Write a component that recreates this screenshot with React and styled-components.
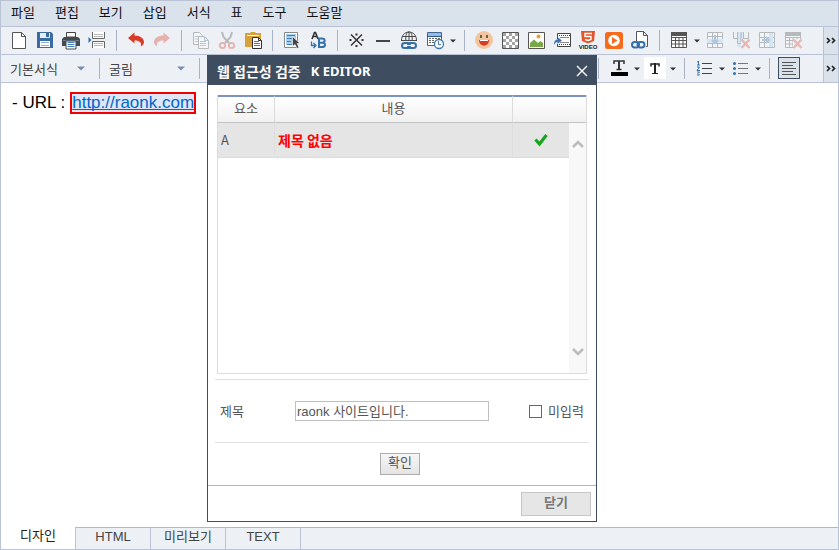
import React from "react";
import styled, { createGlobalStyle, css } from "styled-components";

const Global = createGlobalStyle`
  *, *::before, *::after { box-sizing: border-box; }
  body { margin: 0; background: #fff; }
  body, button, input, select {
    font-family: "Noto Sans CJK KR", "Liberation Sans", sans-serif;
    font-size: 13px;
  }
  button, select { cursor: pointer; }
`;

const line = "#b9c3d5";
const navy = "#3f4d60";

/* ---------- editor frame ---------- */

const Editor = styled.div`
  position: relative;
  display: flex;
  flex-direction: column;
  min-height: 100vh;
  border: 1px solid ${line};
  background: #fff;
`;

const MenuBar = styled.nav`
  display: flex;
  gap: 20px;
  height: 26px;
  padding: 0 10px 4px;
  background: #dae2eb;
  border-bottom: 1px solid ${line};
`;

const MenuItem = styled.button`
  padding: 0;
  border: 0;
  background: none;
  color: #111;
  line-height: 20px;
  white-space: nowrap;
`;

const Toolbar = styled.div`
  display: flex;
  height: 28px;
  padding-left: 5px;
  background: #edf1f5;
  border-bottom: 1px solid ${line};
`;

const ToolButton = styled.button`
  flex: none;
  display: flex;
  align-items: center;
  justify-content: center;
  width: 26px;
  height: 27px;
  padding: 0;
  border: 0;
  background: none;
  opacity: ${(p) => (p.$faded ? 0.35 : 1)};
`;

const ArrowButton = styled(ToolButton)`
  width: 10px;
`;

const FrameButton = styled(ToolButton)`
  width: 22px;
  height: 22px;
  margin: 2px;
  background: ${(p) => (p.$pressed ? "#d9e1ea" : "#fff")};
  border: ${(p) => (p.$pressed ? `1px solid ${navy}` : "0")};
`;

const Separator = styled.span`
  flex: none;
  width: 1px;
  height: 21px;
  margin: 3px 6px;
  background: #aab2c6;
`;

const More = styled(ToolButton)`
  width: 15px;
  margin-left: auto;
  background: #dae2eb;
  border-left: 1px solid ${line};
`;

const FormatBar = styled(Toolbar)`
  padding-left: 0;
`;

const Picker = styled.label`
  flex: none;
  display: flex;
  align-items: center;
  width: ${(p) => p.$width}px;
  height: 21px;
  margin-top: 3px;
  padding: 0 14px 0 9px;
  border-right: 1px solid #aab2c6;
`;

const PickerSelect = styled.select`
  appearance: none;
  flex: 1;
  min-width: 0;
  height: 21px;
  padding: 0;
  border: 0;
  background: none;
  color: #444;
`;

const StyleTools = styled.div`
  display: flex;
  padding-left: 7px;
`;

const Page = styled.main`
  flex: 1;
  padding: 9px 11px;
`;

const Paragraph = styled.p`
  display: flex;
  align-items: center;
  gap: 5px;
  margin: 0;
  color: #000;
  font-family: "Liberation Sans", sans-serif;
  font-size: 17px;
  line-height: 18px;
`;

const UrlLink = styled.a`
  border: 2px solid #f00000;
  background: #dfe6f6;
  color: #0066cc;
  text-decoration: underline;
  text-decoration-skip-ink: none;
`;

const Tabs = styled.div`
  display: flex;
  height: 22px;
`;

const Tab = styled.button`
  width: ${(p) => (p.$active ? 74 : 75)}px;
  padding: 0 0 4px;
  border: 0;
  color: #444;
  background: #edf1f5;
  font-family: "Liberation Sans", "Noto Sans CJK KR", sans-serif;
  line-height: 16px;
  ${(p) =>
    p.$active
      ? css`
          background: #fff;
          color: #222;
        `
      : css`
          border-left: 1px solid ${line};
          border-top: 1px solid #adb8cc;
        `}
`;

const TabRest = styled.div`
  flex: 1;
  border-left: 1px solid ${line};
  border-top: 1px solid #adb8cc;
  background: #edf1f5;
`;

/* ---------- dialog ---------- */

const Dialog = styled.section`
  position: absolute;
  top: 54px;
  left: 206px;
  width: 390px;
  border: 1px solid ${navy};
  background: #fff;
  color: #555;
`;

const DialogHeader = styled.header`
  display: flex;
  align-items: center;
  justify-content: space-between;
  height: 29px;
  padding: 0 6px 0 9px;
  background: ${navy};
`;

const DialogTitle = styled.h1`
  display: flex;
  align-items: center;
  gap: 10px;
  margin: 0;
  color: #fff;
  font-size: 14px;
  font-weight: 700;
  line-height: 26px;
`;

const Product = styled.span`
  font-family: "Noto Sans", sans-serif;
  font-size: 13px;
  line-height: 28px;
`;

const CloseIcon = styled.button`
  display: flex;
  padding: 0;
  border: 0;
  background: none;
`;

const DialogBody = styled.div`
  padding: 10px 7px 0;
`;

const TableFrame = styled.div`
  margin: 0 2px 5px;
`;

const Results = styled.table`
  width: 100%;
  table-layout: fixed;
  border-collapse: separate;
  border-spacing: 0;
  border-left: 1px solid #dcdcdc;
  border-right: 1px solid #dcdcdc;
`;

const Col = styled.col`
  width: ${(p) => p.$width}px;
`;

const HeadCell = styled.th`
  height: 28px;
  padding: 0 0 4px;
  border-top: 2px solid #7b93c3;
  border-bottom: 1px solid #c3c3c3;
  border-right: ${(p) => (p.$last ? "0" : "1px solid #dcdcdc")};
  background: linear-gradient(#fff, #f1f1f1);
  color: #555;
  font-weight: 400;
  line-height: 20px;
`;

const Cell = styled.td`
  height: 35px;
  padding: 0 3px;
  border-right: ${(p) => (p.$last ? "0" : "1px solid #dedede")};
  border-bottom: 1px solid #dcdcdc;
  background: #e5e5e5;
  line-height: 20px;
  text-align: ${(p) => (p.$last ? "center" : "left")};
`;

const Alert = styled.strong`
  color: #ff0000;
  font-size: 14px;
`;

const CheckMark = styled.svg`
  display: block;
  margin: 0 auto;
`;

const Filler = styled.td`
  height: 216px;
  padding: 0;
  border-bottom: 1px solid #dcdcdc;
`;

const ScrollCell = styled.td`
  padding: 0;
  border-bottom: 1px solid #dcdcdc;
  background: #f8f8f8;
`;

const ScrollTrack = styled.div`
  display: flex;
  flex-direction: column;
  justify-content: space-between;
  height: 250px;
  padding: 13px 0;
`;

const ScrollButton = styled.button`
  display: flex;
  justify-content: center;
  padding: 0;
  border: 0;
  background: none;
`;

const TitleRow = styled.div`
  display: flex;
  align-items: center;
  height: 64px;
  padding: 0 5px;
  border-top: 1px solid #e0e0e0;
  border-bottom: 1px solid #e0e0e0;
`;

const FieldLabel = styled.label`
  width: 75px;
  line-height: 20px;
`;

const TextField = styled.input`
  width: 194px;
  height: 20px;
  padding: 0 1px 2px;
  border: 1px solid #c0c0c0;
  color: #555;
  font-family: "Liberation Sans", "Noto Sans CJK KR", sans-serif;
  outline: 0;
`;

const CheckLabel = styled.label`
  display: flex;
  align-items: center;
  gap: 6px;
  margin-left: auto;
  line-height: 20px;
`;

const CheckBox = styled.input`
  appearance: none;
  width: 13px;
  height: 13px;
  margin: 0;
  border: 1px solid #666;
  background: #fff;
`;

const ConfirmRow = styled.div`
  display: flex;
  justify-content: center;
  height: 42px;
  padding: 10px 4px 0 0;
`;

const ConfirmButton = styled.button`
  width: 40px;
  height: 22px;
  padding: 0 0 4px;
  border: 1px solid #adadad;
  background: linear-gradient(#f6f6f6, #e4e4e4);
  color: #555;
  line-height: 16px;
`;

const DialogFooter = styled.footer`
  display: flex;
  justify-content: flex-end;
  height: 36px;
  padding: 6px 5px;
  border-top: 1px solid #adb8c2;
`;

const CloseButton = styled.button`
  width: 70px;
  height: 24px;
  padding: 0 0 4px;
  border: 1px solid #c6c6c6;
  background: #e6e6e6;
  color: #777;
  font-weight: 700;
  line-height: 18px;
`;

/* ---------- icons ---------- */

const Icon = ({ children }) => (
  <svg width="20" height="21" viewBox="0 0 20 21" fill="none" aria-hidden="true">
    {children}
  </svg>
);

const Caret = ({ color = "#333" }) => (
  <svg width="6" height="4" viewBox="0 0 6 4" aria-hidden="true">
    <path d="M0 0.5H6L3 3.5Z" fill={color} />
  </svg>
);

const WideCaret = () => (
  <svg width="8" height="5" viewBox="0 0 8 5" aria-hidden="true">
    <path d="M0 0.5H8L4 4.5Z" fill="#7890ae" />
  </svg>
);

const links = (
  <g stroke="#356fa9" strokeWidth="2">
    <rect x="3" y="13" width="8" height="5" rx="2.5" />
    <rect x="9" y="13" width="8" height="5" rx="2.5" />
    <path d="M8 15.5h4" stroke="#edf1f5" strokeWidth="1" />
  </g>
);

const tableGrid = (
  <g>
    <path d="M2 3H18V17H2Z" fill="#fff" />
    <path d="M2.5 3V17.5H17.5V3M2 7.5H18M2 10.5H18M2 14H18M6.5 7V17M10 7V17M14 7V17" stroke="#555" />
    <path d="M2 2H18V6H2Z" fill="#555" />
  </g>
);

const redCross = (
  <g>
    <path d="M10 9H19V19H10Z" fill="#edf1f5" />
    <path d="M10.5 9.5L18.5 18M18.5 9.5L10.5 18" stroke="#e24a3b" strokeWidth="2.4" />
  </g>
);

const icons = {
  newDoc: (
    <>
      <path d="M3.5 2.5H12.5L16.5 6.5V18.5H3.5Z" fill="#fff" stroke="#555" />
      <path d="M12.5 2.5V6.5H16.5" stroke="#555" />
    </>
  ),
  save: (
    <>
      <path d="M2 2H16L18 4V18H2Z" fill="#396d9f" />
      <path d="M5 3H15V8H5Z" fill="#e6eef7" />
      <path d="M11 3H14V7H11Z" fill="#396d9f" />
      <path d="M5 11H15V17H5Z" fill="#fff" />
      <path d="M6 12.5H14M6 15.5H14" stroke="#8fb1d3" />
    </>
  ),
  print: (
    <>
      <path d="M5.5 2.5H14.5V7H5.5Z" fill="#fff" stroke="#444" />
      <path d="M3 7H17L19 9V16H1V9Z" fill="#424a52" />
      <path d="M2 10.5H18" stroke="#747b82" />
      <path d="M5 11H15V19H5Z" fill="#fff" stroke="#424a52" />
      <path d="M6.5 12.5H13.5M6.5 14.5H13.5M6.5 16.5H13.5" stroke="#4581b9" />
    </>
  ),
  pageBreak: (
    <>
      <path d="M5.5 2V8.5H17.5V2M5.5 18V11.5H17.5V18" fill="#fff" stroke="#666" />
      <path d="M7 4.5H16M7 6.5H16M7 13.5H16M7 15.5H16" stroke="#bbb" />
      <path d="M1.500 7L4.500 10L1.500 13Z" fill="#2f6fac" />
    </>
  ),
  undo: <path d="M2 8L8.500 2.500V5.500C14.500 5.500 18 8.500 18 12C18 14 16.500 16 14.500 16.500C16.500 13 13.500 10.500 8.500 10.500V13.500Z" fill="#d93c26" />,
  redo: <path d="M18 8L11.500 2.500V5.500C5.500 5.500 2 8.500 2 12C2 14 3.500 16 5.500 16.500C3.500 13 6.500 10.500 11.500 10.500V13.500Z" fill="#d93c26" />,
  copy: (
    <>
      <path d="M2.500 2.500H8.500L11.500 5.500V14.500H2.500Z" fill="#fff" stroke="#555" />
      <path d="M4 6.500H8M4 9H8M4 11.500H8" stroke="#4581b9" />
      <path d="M7.500 6.500H13.500L17.500 10.500V18.500H7.500Z" fill="#fff" stroke="#555" />
      <path d="M13.500 6.500V10.500H17.500M9 11.500H15M9 13.500H15M9 15.500H15" stroke="#4581b9" />
    </>
  ),
  cut: (
    <>
      <path d="M5 2L6.500 7L12 13M15 2L13.500 7L8 13" stroke="#555" strokeWidth="2" />
      <circle cx="5.500" cy="15.500" r="2.700" stroke="#d93c26" strokeWidth="1.800" />
      <circle cx="14.500" cy="15.500" r="2.700" stroke="#d93c26" strokeWidth="1.800" />
    </>
  ),
  paste: (
    <>
      <path d="M2 3H7L8 2H12L13 3H18V17H2Z" fill="#d7a03b" />
      <path d="M4 5.500H16" stroke="#fff" />
      <path d="M9.500 7.500H15.500L18.500 10.500V18.500H9.500Z" fill="#fff" stroke="#333" />
      <path d="M15.500 7.500V10.500H18.500" stroke="#333" />
      <path d="M11 11.500H16M11 13.500H17M11 15.500H17" stroke="#4581b9" />
    </>
  ),
  select: (
    <>
      <path d="M2.500 2.500H15.500V17.500H2.500Z" fill="#fff" stroke="#888" />
      <path d="M4 4H14V15H4Z" fill="#a9cff0" />
      <path d="M5 5.500H13M5 8.500H10M5 11.500H9M5 14.500H10" stroke="#3d7fbd" />
      <path d="M10.500 6.500V16.500L13 14.500L15 18.500L17 17.500L15 13.500H18Z" fill="#444" stroke="#fff" strokeWidth="0.600" />
    </>
  ),
  replace: (
    <>
      <path d="M4 9L6.500 2.500H7.500L10 9M5.500 6.500H8.500" stroke="#333" strokeWidth="1.600" />
      <path d="M11 8.500V17H14C18 17 18 12.700 14.500 12.700C17.500 12.700 17.500 8.500 14 8.500ZM11 12.700H14.500" stroke="#3572ae" strokeWidth="2" />
      <path d="M3.500 11.500V15.500H7M5.500 13L8 15.500L5.500 18" stroke="#3572ae" strokeWidth="1.300" />
    </>
  ),
  special: (
    <>
      <path d="M4 4.500L15 15.500M15 4.500L4 15.500" stroke="#333" strokeWidth="1.500" />
      <path d="M8.500 3.500H10.500V5.500H8.500ZM8.500 15H10.500V17H8.500ZM2.500 9H4.500V11H2.500ZM14.500 9H16.500V11H14.500Z" fill="#333" />
    </>
  ),
  rule: <path d="M3 10H17V12H3Z" fill="#444" />,
  hyperlink: (
    <>
      <path d="M2.500 11C2 -1 18 -1 17.500 11M7 11C6 5 8 2 10 2C12 2 14 5 13 11M10 2V11M3 6.500H17M2.500 10.500H17.500" stroke="#4b4b4b" />
      {links}
    </>
  ),
  dateTime: (
    <>
      <path d="M2.500 2.500H16.500V15.500H2.500Z" fill="#fff" stroke="#41658c" />
      <path d="M3 3H16V6H3Z" fill="#8fbdf0" />
      <path d="M2 6.500H17" stroke="#2f5780" />
      <path d="M4 8.500H15M4 10.500H10M4 12.500H10" stroke="#666" strokeDasharray="2 1" />
      <circle cx="14" cy="14" r="4.500" fill="#fff" stroke="#3f78af" strokeWidth="1.300" />
      <path d="M13.500 11V14.500H16" stroke="#3f78af" />
    </>
  ),
  smile: (
    <>
      <circle cx="10" cy="10" r="9" fill="#f3c59d" />
      <path d="M7 5V8M13 5V8" stroke="#444" strokeWidth="1.600" />
      <path d="M5 10H15C15 17.500 5 17.500 5 10Z" fill="#d93c26" />
      <path d="M6 10.500H14" stroke="#fff" />
    </>
  ),
  checker: (
    <>
      <path d="M2.500 2.500H18.500V18.500H2.500Z" fill="#fff" stroke="#555" />
      <path
        d="M3 4.500H18M6 7.500H18M3 10.500H18M6 13.500H18M3 16.500H18"
        stroke="#a5a5a5"
        strokeWidth="3"
        strokeDasharray="3 3"
      />
    </>
  ),
  image: (
    <>
      <path d="M2.500 2.500H18.500V18.500H2.500Z" fill="#fff" stroke="#555" />
      <path d="M4 17V13L8 9.500L12 13L14.500 11L17 13V17Z" fill="#76a846" />
      <circle cx="12.500" cy="6.500" r="2" fill="#dda43d" />
    </>
  ),
  film: (
    <>
      <path d="M5.500 9V3.500H18.500V16.500H5.500V14" fill="#fff" stroke="#444" />
      <path d="M7 5.500H18M7 14.500H18" stroke="#444" strokeDasharray="1 1" />
      <path d="M8 7.500H17M8 12.500H17" stroke="#888" />
      <path d="M2 15C2 11 3.500 9.500 5.500 9.500V7L10 10.500L5.500 14V12C4 12 3 13 2 15Z" fill="#3d75b0" />
    </>
  ),
  html5: (
    <>
      <path d="M3 1H17L16 11L10 13.500L4 11Z" fill="#e35428" />
      <path d="M14 3.500H7V6.500H13V9.500L10 10.500L7 9.500" stroke="#fff" strokeWidth="1.400" />
      <text x="10" y="19" fill="#222" textAnchor="middle" fontFamily="Liberation Sans, sans-serif" fontSize="6" fontWeight="700">
        VIDEO
      </text>
    </>
  ),
  media: (
    <>
      <rect x="1" y="2" width="18" height="17" rx="2.500" fill="#f66b1c" />
      <circle cx="10" cy="10.500" r="5.800" fill="#fff" />
      <path d="M8 7L13.500 10.500L8 14Z" fill="#f66b1c" />
    </>
  ),
  fileLink: (
    <>
      <path d="M6.500 11V1.500H13.500L17.500 5.500V16.500H16" fill="#fff" stroke="#555" />
      <path d="M13.500 1.500V5.500H17.500" stroke="#555" />
      <g stroke="#356fa9" strokeWidth="2">
        <rect x="2" y="12" width="7" height="5.500" rx="2.700" />
        <rect x="7.500" y="12" width="7" height="5.500" rx="2.700" />
      </g>
    </>
  ),
  table: tableGrid,
  rowInsert: (
    <>
      <path d="M2.500 2.500H17.500V17.500H2.500ZM2 6.500H18M2 13.500H18M7.500 2V17M12.500 2V17" fill="#fff" stroke="#555" />
      <path d="M2 9H18V13H2Z" fill="#a9cff0" />
      <path d="M10 5V13M7 10L10 13L13 10" stroke="#3378b6" strokeWidth="2" />
    </>
  ),
  columnDelete: (
    <>
      <path d="M6 2H12V17H6Z" fill="#a9cff0" />
      <path d="M2.500 2V8.500H6.500M6.500 2V13.500H12.500V2M17.500 2V8.500H12.500M10 2V13" stroke="#555" />
      {redCross}
    </>
  ),
  columnInsert: (
    <>
      <path d="M2.500 2.500H17.500V17.500H2.500ZM2 7.500H18M2 12.500H18M7.500 2V17M12.500 2V17" fill="#fff" stroke="#555" />
      <path d="M12 3H16V17H12Z" fill="#a9cff0" />
      <path d="M5 10H12M9 7L12 10L9 13" stroke="#3378b6" strokeWidth="2" />
    </>
  ),
  tableDelete: (
    <>
      {tableGrid}
      {redCross}
    </>
  ),
  fontColor: (
    <>
      <path d="M5 6V3H15V6M10 3V11M7.500 11.500H12.500" stroke="#333" strokeWidth="1.500" />
      <path d="M9 3H11V12H9Z" fill="#333" />
      <path d="M2 14H19V18H2Z" fill="#000" />
    </>
  ),
  backColor: (
    <>
      <path d="M6 8.500V6H14V8.500" stroke="#222" strokeWidth="1.500" />
      <path d="M9 5H11V15H9ZM7 15H13V16H7Z" fill="#222" />
    </>
  ),
  numbered: (
    <>
      <path d="M8 5.500H18M8 10.500H18M8 15.500H18" stroke="#444" />
      <path d="M4.500 3V7M3 4L4.500 3.500M3 7H6M3 9H5.500L3 12.500H6M3 14H5.500L4 15.500L5.500 17H3" stroke="#3671ab" />
    </>
  ),
  bulleted: (
    <>
      <path d="M8 5.500H18M8 10.500H18M8 15.500H18" stroke="#777" />
      <path
        d="M3 5.500A1.500 1.500 0 1 0 6 5.500A1.500 1.500 0 1 0 3 5.500M3 10.500A1.500 1.500 0 1 0 6 10.500A1.500 1.500 0 1 0 3 10.500M3 15.500A1.500 1.500 0 1 0 6 15.500A1.500 1.500 0 1 0 3 15.500"
        fill="#3671ab"
      />
    </>
  ),
  alignLeft: <path d="M3 4.500H17M3 7.500H14M3 10.500H17M3 13.500H14M3 16.500H17" stroke="#555" />,
};

const Chevrons = () => (
  <svg width="10" height="7" viewBox="0 0 10 7" fill="none" aria-hidden="true">
    <path d="M1 1L3.500 3.500L1 6M6 1L8.500 3.500L6 6" stroke="#222" strokeWidth="1.700" />
  </svg>
);

const Tool = ({ name, label, faded, arrow }) => (
  <>
    <ToolButton type="button" aria-label={label} $faded={faded}>
      <Icon>{icons[name]}</Icon>
    </ToolButton>
    {arrow && (
      <ArrowButton type="button" aria-label={`${label} 옵션`}>
        <Caret />
      </ArrowButton>
    )}
  </>
);

const toolGroups = [
  [["newDoc", "새 문서"], ["save", "저장"], ["print", "인쇄"], ["pageBreak", "페이지 나누기"]],
  [["undo", "실행 취소"], ["redo", "다시 실행", "faded"]],
  [["copy", "복사", "faded"], ["cut", "잘라내기", "faded"], ["paste", "붙여넣기"]],
  [["select", "모두 선택"], ["replace", "바꾸기"]],
  [["special", "특수문자"], ["rule", "가로줄"], ["hyperlink", "하이퍼링크"], ["dateTime", "날짜 시간", "arrow"]],
  [
    ["smile", "이모티콘"],
    ["checker", "배경"],
    ["image", "이미지"],
    ["film", "동영상"],
    ["html5", "HTML5 비디오"],
    ["media", "미디어"],
    ["fileLink", "파일 링크"],
  ],
  [
    ["table", "표", "arrow"],
    ["rowInsert", "행 삽입", "faded"],
    ["columnDelete", "열 삭제", "faded"],
    ["columnInsert", "열 삽입", "faded"],
    ["tableDelete", "표 삭제", "faded"],
  ],
];

const menus = ["파일", "편집", "보기", "삽입", "서식", "표", "도구", "도움말"];

const StylePicker = ({ label, value, width = 99 }) => (
  <Picker $width={width}>
    <PickerSelect aria-label={label} defaultValue={value}>
      <option>{value}</option>
    </PickerSelect>
    <WideCaret />
  </Picker>
);

const AccessibilityDialog = () => (
  <Dialog role="dialog" aria-labelledby="dialog-title">
    <DialogHeader>
      <DialogTitle id="dialog-title">
        웹 접근성 검증 <Product>K EDITOR</Product>
      </DialogTitle>
      <CloseIcon type="button" aria-label="창 닫기">
        <svg width="16" height="16" viewBox="0 0 16 16" fill="none">
          <path d="M3 3L13 13M13 3L3 13" stroke="#fff" strokeWidth="1.400" />
        </svg>
      </CloseIcon>
    </DialogHeader>
    <DialogBody>
      <TableFrame>
        <Results>
          <colgroup>
            <Col $width={57} />
            <col />
            <Col $width={56} />
            <Col $width={17} />
          </colgroup>
          <thead>
            <tr>
              <HeadCell scope="col">요소</HeadCell>
              <HeadCell scope="col">내용</HeadCell>
              <HeadCell scope="col" colSpan={2} $last aria-label="상태" />
            </tr>
          </thead>
          <tbody>
            <tr>
              <Cell>A</Cell>
              <Cell>
                <Alert>제목 없음</Alert>
              </Cell>
              <Cell $last>
                <CheckMark width="14" height="14" viewBox="0 0 14 14" fill="none" role="img" aria-label="완료">
                  <path d="M1.500 6.500L5.500 11L12.500 2" stroke="#19a51d" strokeWidth="3.200" />
                </CheckMark>
              </Cell>
              <ScrollCell rowSpan={2}>
                <ScrollTrack>
                  <ScrollButton type="button" aria-label="위로">
                    <svg width="12" height="16" viewBox="0 0 12 16" fill="none">
                      <path d="M1 11L6 6L11 11" stroke="#bdbdbd" strokeWidth="2.600" />
                    </svg>
                  </ScrollButton>
                  <ScrollButton type="button" aria-label="아래로">
                    <svg width="12" height="16" viewBox="0 0 12 16" fill="none">
                      <path d="M1 5L6 10L11 5" stroke="#bdbdbd" strokeWidth="2.600" />
                    </svg>
                  </ScrollButton>
                </ScrollTrack>
              </ScrollCell>
            </tr>
            <tr>
              <Filler colSpan={3} />
            </tr>
          </tbody>
        </Results>
      </TableFrame>
      <TitleRow>
        <FieldLabel htmlFor="link-title">제목</FieldLabel>
        <TextField id="link-title" type="text" defaultValue="raonk 사이트입니다." />
        <CheckLabel>
          <CheckBox type="checkbox" />
          미입력
        </CheckLabel>
      </TitleRow>
      <ConfirmRow>
        <ConfirmButton type="button">확인</ConfirmButton>
      </ConfirmRow>
    </DialogBody>
    <DialogFooter>
      <CloseButton type="button">닫기</CloseButton>
    </DialogFooter>
  </Dialog>
);

export default function App() {
  return (
    <>
      <Global />
      <Editor>
        <MenuBar>
          {menus.map((menu) => (
            <MenuItem type="button" key={menu}>
              {menu}
            </MenuItem>
          ))}
        </MenuBar>
        <Toolbar>
          {toolGroups.map((group, index) => (
            <React.Fragment key={group[0][0]}>
              {index > 0 && <Separator />}
              {group.map(([name, label, kind]) => (
                <Tool key={name} name={name} label={label} faded={kind === "faded"} arrow={kind === "arrow"} />
              ))}
            </React.Fragment>
          ))}
          <More type="button" aria-label="더 보기">
            <Chevrons />
          </More>
        </Toolbar>
        <FormatBar>
          <StylePicker label="서식" value="기본서식" />
          <StylePicker label="글꼴" value="굴림" width={100} />
          <StylePicker label="글자 크기" value="10pt" width={399} />
          <StyleTools>
            <Tool name="fontColor" label="글자색" arrow />
            <FrameButton type="button" aria-label="배경색">
              <Icon>{icons.backColor}</Icon>
            </FrameButton>
            <ArrowButton type="button" aria-label="배경색 옵션">
              <Caret />
            </ArrowButton>
            <Separator />
            <Tool name="numbered" label="번호 목록" arrow />
            <Tool name="bulleted" label="글머리 목록" arrow />
            <Separator />
            <FrameButton type="button" aria-label="왼쪽 정렬" $pressed>
              <Icon>{icons.alignLeft}</Icon>
            </FrameButton>
          </StyleTools>
          <More type="button" aria-label="더 보기">
            <Chevrons />
          </More>
        </FormatBar>
        <Page>
          <Paragraph>
            - URL : <UrlLink href="http://raonk.com">http://raonk.com</UrlLink>
          </Paragraph>
        </Page>
        <Tabs role="tablist">
          {["디자인", "HTML", "미리보기", "TEXT"].map((tab, index) => (
            <Tab type="button" role="tab" key={tab} aria-selected={index === 0} $active={index === 0}>
              {tab}
            </Tab>
          ))}
          <TabRest />
        </Tabs>
        <AccessibilityDialog />
      </Editor>
    </>
  );
}
